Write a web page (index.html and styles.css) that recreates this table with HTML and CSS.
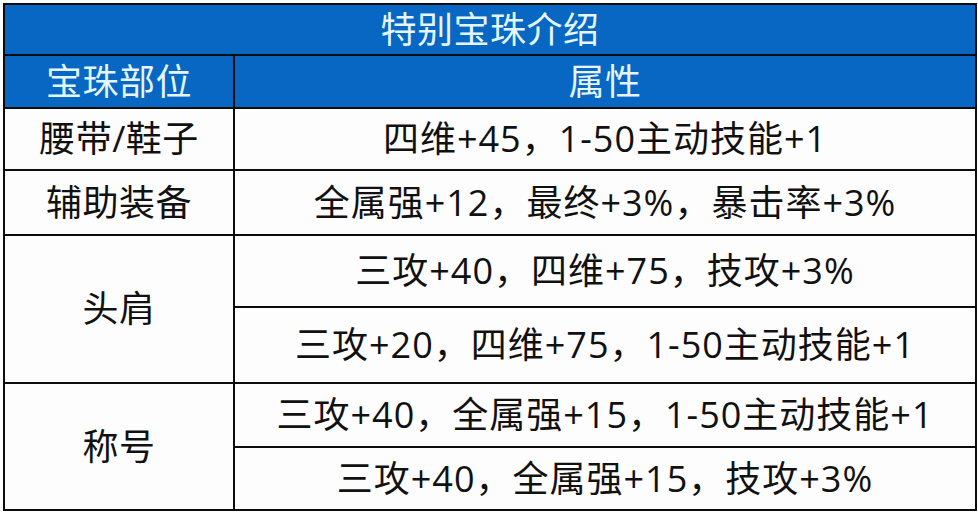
FILE: index.html
```html
<!DOCTYPE html>
<html lang="zh-CN">
<head>
<meta charset="utf-8">
<link rel="stylesheet" href="styles.css">
</head>
<body>
<table class="gem">
  <colgroup><col class="col-slot"><col class="col-attr"></colgroup>
  <tr class="r-title"><th colspan="2" class="title">特别宝珠介绍</th></tr>
  <tr class="r-head"><th>宝珠部位</th><th>属性</th></tr>
  <tr class="r1"><td>腰带/鞋子</td><td class="attr">四维+45，1-50主动技能+1</td></tr>
  <tr class="r2"><td>辅助装备</td><td class="attr">全属强+12，最终+3%，暴击率+3%</td></tr>
  <tr class="r3"><td rowspan="2">头肩</td><td class="attr">三攻+40，四维+75，技攻+3%</td></tr>
  <tr class="r4"><td class="attr">三攻+20，四维+75，1-50主动技能+1</td></tr>
  <tr class="r5"><td rowspan="2">称号</td><td class="attr">三攻+40，全属强+15，1-50主动技能+1</td></tr>
  <tr class="r6"><td class="attr">三攻+40，全属强+15，技攻+3%</td></tr>
</table>
</body>
</html>
```
FILE: styles.css
```css
html, body {
  margin: 0;
  padding: 0;
  background: #ffffff;
}
body {
  padding: 3px 0 0 3px;
  font-family: "Open Sans", "Noto Sans CJK SC", sans-serif;
}
.gem {
  border-collapse: collapse;
  width: 972px;
  table-layout: fixed;
  color: #111111;
  font-size: 36px;
  letter-spacing: 0.5px;
  font-weight: 400;
}
.col-slot { width: 230px; }
.col-attr { width: 742px; }
.gem th, .gem td {
  border: 2px solid #0c0c0c;
  text-align: center;
  vertical-align: middle;
  padding: 0;
  line-height: 1;
  white-space: nowrap;
}
.gem th {
  background: #0767c2;
  color: #e4f6ff;
  font-weight: 400;
}
.gem td {
  background: #fdfdfd;
}
.gem .attr {
  letter-spacing: 1px;
}
.r-title { height: 51px; }
.r-head { height: 53px; }
.r1 { height: 62px; }
.r2 { height: 65px; }
.r3 { height: 72px; }
.r4 { height: 76px; }
.r5 { height: 64px; }
.r6 { height: 63px; }
```
